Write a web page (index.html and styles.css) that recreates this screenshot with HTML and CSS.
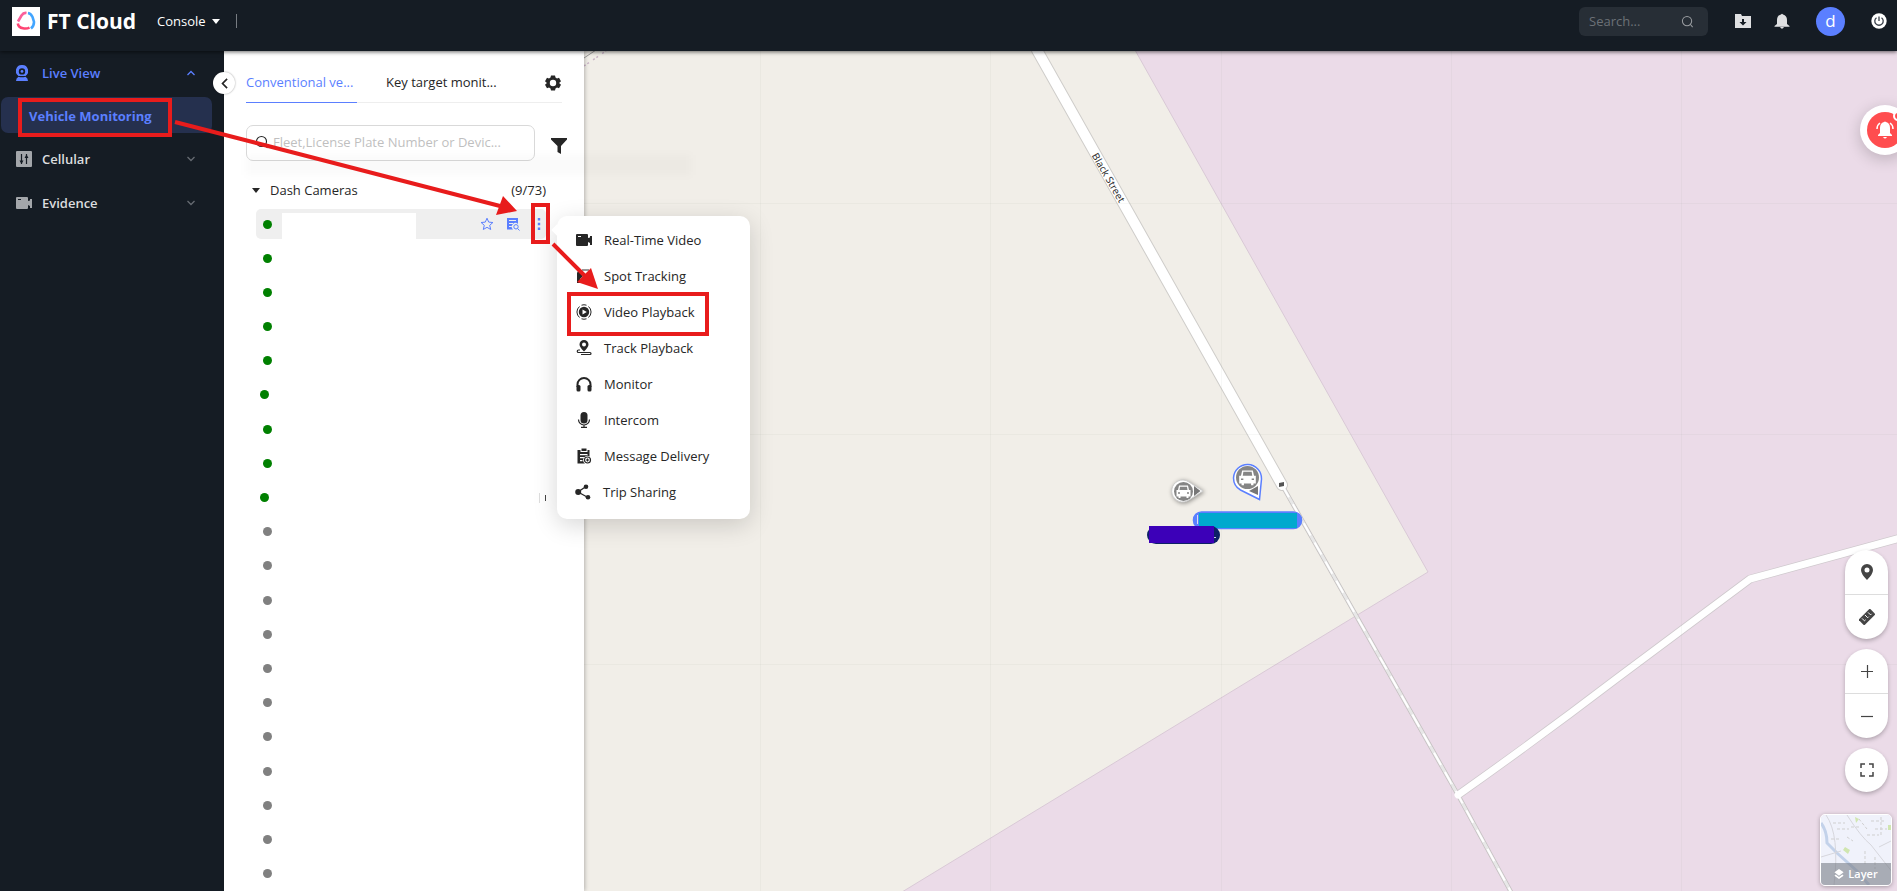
FILE: index.html
```html
<!DOCTYPE html>
<html lang="en">
<head>
<meta charset="utf-8">
<meta name="viewport" content="width=device-width, initial-scale=1">
<title>FT Cloud</title>
<link rel="stylesheet" href="styles.css">
</head>
<body>
<svg class="defs" aria-hidden="true">
  <symbol id="chev" viewBox="0 0 10 10"><path d="M1.500 7 5 3.500 8.500 7" fill="none" stroke="currentColor" stroke-width="1.300"/></symbol>
  <symbol id="lens" viewBox="0 0 14 14"><circle cx="6.500" cy="6.500" r="5" fill="none" stroke="currentColor" stroke-width="1.100"/><path d="m10 10 2.500 3" stroke="currentColor" stroke-width="1.100"/></symbol>
  <symbol id="cam" viewBox="0 0 16 16"><path fill="currentColor" fill-rule="evenodd" d="M1 2h10a1 1 0 0 1 1 1v3l2-.5V4h2v9h-2v-2l-2-1v3a1 1 0 0 1-1 1H1a1 1 0 0 1-1-1V3a1 1 0 0 1 1-1zm1 2v1h3V4z"/></symbol>
  <symbol id="car" viewBox="-8 -8 16 16"><path fill="#fff" fill-rule="evenodd" d="M-4.500-6h9l1 4.500H7V5H5v1.500H3V5h-6v1.500h-2V5h-2v-6.500h1.500zM-3.500-4.800-4-1.500h8l-.5-3.300zM-5.500.800v1.400h2V.800zm9 0v1.400h2V.800z"/></symbol>
</svg>
<header class="top">
  <a class="brand" href="#"><svg class="logo" viewBox="0 0 28 29"><path fill="#fff" d="M0 0h28v29H0z"/><g fill="none" stroke-width="2.600"><path d="M16 6q3 .5 4.500 4l1.500 5q0 4-3 6.500" stroke="#42a5ff"/><path d="M14.500 6q-3-.5-5 2.500L6 14.500" stroke="#fb5f9a"/><path d="M5.800 16.500q.7 4 5.200 4.800 4 .7 6.500-.8" stroke="#ff4473"/></g></svg>FT Cloud</a>
  <button class="console" type="button">Console <i class="tri"></i></button>
  <span class="rule"></span>
  <label class="find"><input type="search" placeholder="Search..." aria-label="Search"><svg viewBox="0 0 14 14"><use href="#lens"/></svg></label>
  <button class="tool" type="button" aria-label="Downloads"><svg viewBox="0 0 16 16"><path fill="currentColor" fill-rule="evenodd" d="M0 1h6l1 2h9v12H0zm7 5v3H4.500L8 12.500 11.500 9H9V6z"/></svg></button>
  <button class="tool" type="button" aria-label="Notifications"><svg viewBox="0 0 16 16"><path fill="currentColor" d="M7 1.500q1-1.500 2 0 4 1 4 5.500v4l2.500 2v.700H.500V13L3 11V7q0-4.500 4-5.500zM6 14h4q-2 3.500-4 0z"/></svg></button>
  <button class="avatar" type="button">d</button>
  <button class="tool power" type="button" aria-label="Log out"><svg viewBox="0 0 16 16"><circle cx="8" cy="8" r="7.700" fill="#fff"/><path d="M5.500 4.700a4.200 4.200 0 1 0 5 0M8 3.500v4.500" fill="none" stroke="#39404a" stroke-width="1.300"/></svg></button>
</header>
<div class="body">
  <nav class="side">
    <a class="group open" href="#"><svg class="eye" viewBox="0 0 12 16"><path fill="currentColor" fill-rule="evenodd" d="M6 0a6 6 0 0 1 3.500 11h-7A6 6 0 0 1 6 0zm0 3.200a3.200 3.200 0 1 0 0 6.400 3.200 3.200 0 0 0 0-6.400zM0 16q0-3 2.500-4.200 3.500 1 7 0Q12 13 12 16z"/><circle cx="6" cy="6.400" r="1.400" fill="currentColor"/></svg>Live View<svg class="arr" viewBox="0 0 10 10"><use href="#chev"/></svg></a>
    <a class="sub" href="#">Vehicle Monitoring</a>
    <a class="group" href="#"><svg viewBox="0 0 16 16"><rect width="16" height="16" rx="1" fill="#a3a6aa"/><path d="M5.500 3v10M10.500 3v10" stroke="#151c24" stroke-width="1.200"/><path d="M3.500 9.500h4l-2 3.500zM8.500 7h4l-2-3.500z" fill="#151c24"/></svg>Cellular<svg class="arr down" viewBox="0 0 10 10"><use href="#chev"/></svg></a>
    <a class="group" href="#"><svg class="grey" viewBox="0 0 16 16"><use href="#cam"/></svg>Evidence<svg class="arr down" viewBox="0 0 10 10"><use href="#chev"/></svg></a>
  </nav>
  <section class="panel">
    <button class="fold" type="button" aria-label="Collapse"><svg viewBox="0 0 10 10"><use href="#chev"/></svg></button>
    <div class="tabs">
      <button class="tab on" type="button">Conventional ve...</button>
      <button class="tab" type="button">Key target monit...</button>
      <button class="gear" type="button" aria-label="Settings"><svg viewBox="-8 -8 16 16"><path fill="currentColor" fill-rule="evenodd" d="M-2-7.500h4l.5 2 1.500.9 2-.7 2 3.500L6.300-.300v.600L8 1.800 6 5.300l-2-.700-1.500.9-.5 2h-4l-.5-2L-4 4.600l-2 .7-2-3.500L-6.300.300v-.600L-8-1.800l2-3.500 2 .7 1.500-.9zM0-3.200a3.200 3.200 0 1 0 0 6.400 3.200 3.200 0 0 0 0-6.400z"/></svg></button>
    </div>
    <div class="query">
      <label class="box"><svg viewBox="0 0 14 14"><use href="#lens"/></svg><input type="text" placeholder="Fleet,License Plate Number or Devic..." aria-label="Fleet, plate or device"></label>
      <button class="filter" type="button" aria-label="Filter"><svg viewBox="0 0 16 16"><path fill="currentColor" d="M0 0h16v1.500L10 8v8l-3.500-2V8L0 1.500z"/></svg></button>
    </div>
    <div class="fleet"><i class="tri"></i><span>Dash Cameras</span><span class="count">(9/73)</span></div>
    <ul class="units">
      <li class="sel"><i class="dot"></i><span class="name"></span>
        <button type="button" aria-label="Favourite"><svg viewBox="0 0 14 14"><path d="m7 1.200 1.700 3.900 4.200.4-3.200 2.800 1 4.200L7 10.300l-3.700 2.200 1-4.200L1.100 5.500l4.200-.4z" fill="none" stroke="currentColor"/></svg></button>
        <button type="button" aria-label="Details"><svg viewBox="0 0 14 14"><path fill="currentColor" fill-rule="evenodd" d="M1 1h11v6a3.500 3.500 0 0 0-5 5.500H1zm2 2v1h7V3zm0 3v1h4V6zm0 3v1h2.500V9z"/><circle cx="10" cy="9.800" r="2.200" fill="none" stroke="currentColor"/><path d="m11.500 11.500 2 2" stroke="currentColor"/></svg></button>
        <button class="more" type="button" aria-label="More"><svg viewBox="0 0 14 14"><path fill="currentColor" d="M5.800 1h2.400v2.400H5.800zm0 4.800h2.400v2.400H5.800zm0 4.800h2.400V13H5.800z"/></svg></button></li>
      <li><i class="dot"></i></li><li><i class="dot"></i></li><li><i class="dot"></i></li><li><i class="dot"></i></li>
      <li class="near"><i class="dot"></i></li><li><i class="dot"></i></li><li><i class="dot"></i></li>
      <li class="near"><i class="dot"></i><span class="tick"></span><span class="speck"></span></li>
      <li class="off"><i class="dot"></i></li><li class="off"><i class="dot"></i></li><li class="off"><i class="dot"></i></li><li class="off"><i class="dot"></i></li><li class="off"><i class="dot"></i></li><li class="off"><i class="dot"></i></li><li class="off"><i class="dot"></i></li><li class="off"><i class="dot"></i></li><li class="off"><i class="dot"></i></li><li class="off"><i class="dot"></i></li><li class="off"><i class="dot"></i></li>
    </ul>
    <div class="haze"></div>
    <menu class="menu">
      <li><button type="button"><svg viewBox="0 0 16 16"><use href="#cam"/></svg>Real-Time Video</button></li>
      <li><button type="button"><svg viewBox="0 0 16 16"><path fill="currentColor" d="M2 3h5v5l-3 3v4H1V5z"/><path fill="#999" d="M6 1h7v2H6z"/></svg>Spot Tracking</button></li>
      <li><button type="button"><svg viewBox="0 0 16 16"><path fill="currentColor" fill-rule="evenodd" d="M8 2.800a5.200 5.200 0 1 1 0 10.400A5.200 5.200 0 0 1 8 2.800zM6.500 5.500v5L10.800 8z"/><path d="M5.500 1.200a7.200 7.200 0 0 1 5 0M5.500 14.800a7.200 7.200 0 0 0 5 0M3.500 2.500a7.200 7.200 0 0 0 0 11M12.500 2.500a7.200 7.200 0 0 1 0 11" fill="none" stroke="currentColor"/></svg>Video Playback</button></li>
      <li><button type="button"><svg viewBox="0 0 16 16"><path fill="currentColor" fill-rule="evenodd" d="M8 0a4.500 4.500 0 0 1 4.500 4.500Q12.500 7 8 11.500 3.500 7 3.500 4.500A4.500 4.500 0 0 1 8 0zm0 2.500a2 2 0 1 0 0 4 2 2 0 0 0 0-4z"/><path d="M4 10H2.500a1.200 1.200 0 0 0 0 2.500H14a1 1 0 0 1 0 2H5" fill="none" stroke="currentColor" stroke-width="1.200"/></svg>Track Playback</button></li>
      <li><button type="button"><svg viewBox="0 0 16 16"><path d="M1.500 11V8.500a6.500 6.500 0 0 1 13 0V11" fill="none" stroke="currentColor" stroke-width="2"/><rect x=".5" y="9" width="4" height="6.500" rx="1.500" fill="currentColor"/><rect x="11.500" y="9" width="4" height="6.500" rx="1.500" fill="currentColor"/></svg>Monitor</button></li>
      <li><button type="button"><svg viewBox="0 0 16 16"><rect x="4.500" width="7" height="11.500" rx="3.500" fill="currentColor"/><path d="M2.500 7.500a5.500 5.500 0 0 0 11 0M8 13v2.300M5 15.300h6" fill="none" stroke="currentColor" stroke-width="1.200"/></svg>Intercom</button></li>
      <li><button type="button"><svg viewBox="0 0 16 16"><path fill="currentColor" fill-rule="evenodd" d="M1.500 2h3v2h7V2h2v6.500a4 4 0 0 0-4.500 7H1.500zM4 6v1.200h7.500V6zm0 3v1.200h4V9zm0 3v1.200h2.500V12z"/><path fill="currentColor" d="M5.500.500h5V3h-5z"/><circle cx="11.500" cy="12" r="3" fill="none" stroke="currentColor" stroke-width="1.200"/><path d="M11.500 10.500v3M10 12h3" stroke="currentColor" stroke-width="1.200"/></svg>Message Delivery</button></li>
      <li><button class="share" type="button"><svg viewBox="0 0 16 16"><path d="M13 13.500 3 8l8-5.500" fill="none" stroke="currentColor" stroke-width="1.300"/><circle cx="3.200" cy="8" r="3" fill="currentColor"/><circle cx="11" cy="2.800" r="2.300" fill="currentColor"/><circle cx="13" cy="13.200" r="2.300" fill="currentColor"/></svg>Trip Sharing</button></li>
    </menu>
  </section>
  <main class="map">
    <svg class="chart" viewBox="584 51 1313 840" preserveAspectRatio="xMinYMin slice" role="img" aria-label="Map">
      <path fill="#f1eee8" d="M584 51h1313v840H584z"/>
      <path d="M1135 50 1428 572 902 892h1000V50z" fill="#ebdbe8" stroke="#d9c9d6"/>
      <g fill="none" stroke-linejoin="round">
        <path d="M1037 50 1282 485" stroke="#cfcdca" stroke-width="12" stroke-linecap="round"/>
        <path d="M1282 485 1458 795 1511 892" stroke="#c4c0c0" stroke-width="4.500"/>
        <path d="M1458 795Q1540 737 1616 679L1750 579 1900 538" stroke="#cfc9cd" stroke-width="8.500"/>
        <path d="M1282 485 1458 795 1511 892" stroke="#e8e8e8" stroke-width="3"/>
        <path d="M1282 485 1458 795 1511 892" stroke="#fff" stroke-width="2" stroke-dasharray="14 8"/>
        <path d="M1458 795Q1540 737 1616 679L1750 579 1900 538" stroke="#fff" stroke-width="7" stroke-linecap="round"/>
        <path d="M1037 50 1282 485" stroke="#fff" stroke-width="10" stroke-linecap="round"/>
      </g>
      <path d="M760.500 51v840M990.500 51v840M1221.500 51v840M1451.500 51v840M1681.500 51v840M584 203.500h1313M584 434.500h1313M584 664.500h1313" stroke="#8a9a8a" stroke-opacity=".07"/>
      <path d="m584 58 12-8" stroke="#999" fill="none"/><path d="m584 66 22-15" stroke="#c9b3c6" stroke-width="1.500" fill="none" stroke-dasharray="2 2 2 5"/>
      <text class="street" transform="translate(1108 178) rotate(60)" text-anchor="middle" y="3">Black Street</text>
      <path d="m1279 483 5-1v4l-5 1z" fill="#555"/>
      <g class="pin"><path d="M1183 480a11 11 0 1 0 6 20l14-9-14-9a11 11 0 0 0-6-2z" fill="#fff" stroke="#ccc"/><circle cx="1183.500" cy="491.500" r="9.500" fill="#858585"/><path d="m1194 486 6.500 5-6.500 5z" fill="#777"/><use href="#car" x="1175.500" y="483.500" width="16" height="16"/></g>
      <path d="M1233.500 478a14 14 0 1 1 28 1l-2 20.500-19-9.500a14 14 0 0 1-7-12z" fill="#fff" stroke="#5b7fff" stroke-width="1.500"/><circle cx="1247.500" cy="477.500" r="11.500" fill="#858585"/><path d="m1249 491 9-5v9z" fill="#777"/><use href="#car" x="1238" y="468" width="19" height="19"/>
      <rect x="1193.500" y="512" width="108" height="16.500" rx="8" fill="#5b7fff" stroke="#5b7fff" stroke-width="1.500"/><path d="M1199 513h98v15h-98z" fill="#00a9ce"/><path d="M1197.500 515v9" stroke="#dde"/>
      <rect x="1147" y="526" width="73" height="18" rx="9" fill="#0d2067"/><path d="M1149 526h65v17h-65z" fill="#3c00b8"/><path d="M1214 537.500h2" stroke="#ccd"/>
    </svg>
    <button class="alarm" type="button" aria-label="Alarms"><span class="disc"><svg viewBox="0 0 18 18"><path fill="#fff" d="M8 1q1-1 2 0 4 1 4 6v5l2 2v1H2v-1l2-2V7q0-5 4-6zM7 16h4q-2 3-4 0z"/><path d="M1 8q0-4 3-6M17 8q0-4-3-6" fill="none" stroke="#fff" stroke-width="1.500"/></svg></span><span class="ring"></span></button>
    <div class="controls">
      <div class="pill">
        <button type="button" aria-label="Place"><svg viewBox="0 0 16 16"><path fill="currentColor" fill-rule="evenodd" d="M8 0a6 6 0 0 1 6 6q0 4-6 10Q2 10 2 6a6 6 0 0 1 6-6zm0 3.500a2.500 2.500 0 1 0 0 5 2.500 2.500 0 0 0 0-5z"/></svg></button>
        <button type="button" aria-label="Measure"><svg viewBox="0 0 16 16"><g transform="rotate(-45 8 8)"><path fill="currentColor" d="M0 4h16v8H0z"/><path d="M3.500 5.500v3.500h1.500M8 5v4h1.500M12 5.500v3.500h1.500" fill="none" stroke="#fff" stroke-width=".9"/></g></svg></button>
      </div>
      <div class="pill">
        <button type="button" aria-label="Zoom in"><svg viewBox="0 0 16 16"><path d="M2 8.500h12M8.500 2v13" stroke="currentColor" stroke-width="1.200"/></svg></button>
        <button type="button" aria-label="Zoom out"><svg viewBox="0 0 16 16"><path d="M2 8.500h12" stroke="currentColor" stroke-width="1.200"/></svg></button>
      </div>
      <div class="pill"><button type="button" aria-label="Full screen"><svg viewBox="0 0 16 16"><path d="M2 6V2h4M10 2h4v4M14 10v4h-4M6 14H2v-4" fill="none" stroke="currentColor" stroke-width="1.500"/></svg></button></div>
      <button class="layer" type="button"><svg class="thumb" viewBox="0 0 70 70" preserveAspectRatio="none"><path fill="#f0f2fb" d="M0 0h70v70H0z"/><path d="M0 8q6 8 6 20l10 10 20 18 12 14" fill="none" stroke="#c3d2ea" stroke-width="3"/><path d="M5 0q14 20 8 70M26 0q14 22 24 30l22 28M70 26 58 32M0 42l20-6" fill="none" stroke="#d6d6dc"/><path d="M12 8h12M16 14h12M30 12h10M38 4l8 10M50 6h14M54 14h12M60 2v18M46 20h12M10 24h8M26 22l6 4M44 36v14M54 42v12" fill="none" stroke="#cfcfcf" stroke-dasharray="3 2"/><path d="m24 32 5 3-2 4-5-4zM34 2l4 2-3 4zM67 10h3v5h-3z" fill="#d0e6b0"/></svg><span class="cap"><svg viewBox="0 0 12 12"><path fill="#fff" d="M6 0 11.500 4 6 8 .500 4zM2 6.500l4 3 4-3L11.500 8 6 12 .500 8z"/></svg>Layer</span></button>
    </div>
  </main>
</div>
<svg class="guide" viewBox="0 0 760 360" aria-hidden="true"><g fill="none" stroke="#e81c1c" stroke-width="4"><path d="M20 100h150v35H20zM533 205h15v37h-15zM569 294h138v40H569zM175 122l325 84M553 244l32 32"/></g><path fill="#e81c1c" d="m517 211-14-15-7 19zM598 289l-7-21-14 14z"/></svg>
</body>
</html>
```
FILE: styles.css
```css
* { box-sizing: border-box; }
body { margin: 0; height: 100vh; display: flex; flex-direction: column; overflow: hidden; font: 13px/20px "Open Sans", "Noto Sans", sans-serif; color: #262626; position: relative; }
button { font: inherit; color: inherit; background: none; border: 0; padding: 0; display: flex; align-items: center; cursor: pointer; }
a { color: inherit; text-decoration: none; }
input { font: inherit; border: 0; background: none; outline: 0; min-width: 0; width: 100%; padding: 0; }
svg { display: block; flex: none; }
.defs { position: absolute; width: 0; height: 0; }
.tri { border: 4px solid transparent; border-top: 5px solid currentColor; border-bottom: 0; }

.top { height: 51px; flex: none; display: flex; align-items: center; padding: 0 10px 9px 12px; background: #151c24; color: #fff; position: relative; z-index: 3; box-shadow: 0 1px 4px rgba(0, 0, 0, .6); }
.brand { display: flex; align-items: center; gap: 7px; font-size: 21px; font-weight: 700; }
.logo { width: 28px; height: 29px; }
.console { margin-left: 21px; gap: 6px; }
.rule { width: 1px; height: 14px; margin-left: 16px; background: #777c82; }
.find { margin-left: auto; width: 129px; height: 29px; border-radius: 6px; background: #272e36; display: flex; align-items: center; padding: 0 14px 0 10px; color: #9a9da1; }
.find input { color: #fff; }
.find input::placeholder { color: #6c7177; opacity: 1; }
.find svg { width: 13px; height: 13px; }
.tool { margin-left: 23px; color: #dfe0e2; }
.find + .tool { margin-left: 27px; }
.tool svg { width: 16px; height: 16px; }
.avatar { width: 29px; height: 29px; margin-left: 26px; border-radius: 50%; background: #5b7fff; justify-content: center; font-size: 17px; }
.power { margin-left: 26px; }

.body { flex: 1; display: flex; min-height: 0; }
.side { width: 224px; flex: none; background: #151c24; color: #dcdddf; font-weight: 600; }
.group { height: 44px; display: flex; align-items: center; padding: 0 28px 0 16px; gap: 10px; }
.group svg { width: 16px; height: 16px; }
.group .eye { width: 12px; margin-right: 4px; }
.group .arr { width: 10px; height: 10px; margin-left: auto; color: #666b72; }
.down { transform: rotate(180deg); }
.grey { color: #a3a6aa; }
.open, .open .arr, .sub { color: #5b7fff; }
.sub { height: 36px; margin: 2px 12px 4px 1px; padding: 2px 0 0 28px; display: flex; align-items: center; border-radius: 7px; background: #25304e; font-weight: 700; }

.panel { width: 360px; flex: none; background: #fff; position: relative; z-index: 2; display: flex; flex-direction: column; box-shadow: 1px 0 4px rgba(0, 0, 0, .25); }
.fold { position: absolute; left: -11px; top: 21px; width: 22px; height: 22px; border-radius: 50%; background: #fff; justify-content: center; box-shadow: 0 0 2px rgba(0, 0, 0, .4); }
.fold svg { width: 13px; height: 13px; transform: rotate(-90deg); }
.tabs { height: 52px; margin: 0 22px; padding-top: 10px; display: flex; border-bottom: 1px solid #eee; }
.tab { width: 111px; height: 42px; margin-right: 29px; white-space: nowrap; border-bottom: 1px solid transparent; }
.on { color: #5b7fff; border-color: #5b7fff; }
.gear { margin: 0 1px 0 auto; height: 43px; }
.tabs .tab + .tab { margin-right: 0; }
.gear svg, .filter svg { width: 16px; height: 16px; }
.query { display: flex; align-items: center; padding: 22px 17px 14px 22px; gap: 16px; }
.box { flex: 1; height: 36px; display: flex; align-items: center; gap: 0; padding: 0 8px 2px; border: 1px solid #d9d9d9; border-radius: 7px; }
.box svg { width: 14px; height: 14px; margin-right: 4px; }
.box input::placeholder { color: #bfbfbf; opacity: 1; }
.filter { margin-top: 6px; }
.fleet { display: flex; align-items: center; height: 32px; padding: 0 38px 2px 28px; gap: 10px; }
.count { margin-left: auto; }
.units { list-style: none; margin: 0 38px 0 32px; padding: 2px 0 0; flex: 1; display: flex; flex-direction: column; }
.units li { flex: 1; display: flex; align-items: center; padding-left: 7px; }
.units .near { padding-left: 4px; }
.units .sel { flex: none; height: 30px; margin-bottom: 2px; background: #efefef; border-radius: 5px; color: #5b7fff; gap: 12px; }
.dot { width: 9px; height: 9px; border-radius: 50%; background: green; flex: none; }
.off .dot { background: gray; }
.units .dot + .name { width: 134px; align-self: stretch; margin: 4px auto 0 -2px; background: #fff; }
.sel svg { width: 14px; height: 14px; }
.tick { width: 1px; height: 10px; margin-left: auto; background: #ddd; }
.speck { width: 1px; height: 6px; margin-left: 5px; background: #444; }
.haze { position: absolute; left: 22px; top: 104px; width: 445px; height: 20px; background: rgba(0, 0, 0, .02); filter: blur(4px); pointer-events: none; }

.menu { position: absolute; left: 333px; top: 165px; width: 193px; margin: 0; padding: 6px 0 9px; list-style: none; background: #fff; border-radius: 10px; box-shadow: 0 6px 24px rgba(0, 0, 0, .16); }
.menu::before { content: ""; position: absolute; left: -4px; top: 10px; width: 8px; height: 8px; background: #fff; transform: rotate(45deg); }
.menu button { width: 100%; height: 36px; padding-left: 19px; gap: 12px; }
.menu svg { width: 16px; height: 16px; }
.menu .share { padding-left: 18px; }

.map { flex: 1; min-width: 0; position: relative; background: #f1eee8; overflow: hidden; }
.chart { width: 100%; height: 100%; }
.street { font: 10px "Noto Sans", sans-serif; fill: #333; }
.pin { filter: drop-shadow(1px 1px 2px rgba(0, 0, 0, .4)); }
.alarm { position: absolute; right: -13px; top: 54px; width: 50px; height: 50px; border-radius: 50%; background: #fff; justify-content: center; box-shadow: 0 4px 16px rgba(0, 0, 0, .2); }
.disc { width: 36px; height: 36px; border-radius: 50%; background: #ff4d4f; display: flex; align-items: center; justify-content: center; }
.disc svg { width: 18px; height: 18px; }
.ring { position: absolute; right: 7px; top: 6px; width: 10px; height: 10px; border: 2px solid #fff; border-radius: 50%; background: #ff4d4f; }
.controls { position: absolute; right: 5px; bottom: 5px; display: flex; flex-direction: column; align-items: flex-end; gap: 10px; }
.pill { width: 43px; margin-right: 4px; border-radius: 22px; background: #fff; box-shadow: 0 2px 4px rgba(0, 0, 0, .25); color: #444; }
.pill button { width: 100%; height: 44px; justify-content: center; }
.pill button + button { height: 45px; border-top: 1px solid #ddd; }
.pill svg { width: 16px; height: 16px; }
.layer { width: 72px; height: 72px; margin-top: 12px; border: 1px solid #fff; border-radius: 5px; overflow: hidden; position: relative; color: #fff; font-size: 11px; font-weight: 600; box-shadow: 0 1px 4px rgba(0, 0, 0, .3); }
.thumb { width: 100%; height: 100%; }
.cap { position: absolute; left: 0; right: 0; bottom: 0; height: 22px; display: flex; align-items: center; justify-content: center; gap: 4px; background: rgba(120, 125, 135, .6); }
.cap svg { width: 10px; height: 10px; }
.guide { position: absolute; left: 0; top: 0; width: 760px; height: 360px; z-index: 5; pointer-events: none; }
```
